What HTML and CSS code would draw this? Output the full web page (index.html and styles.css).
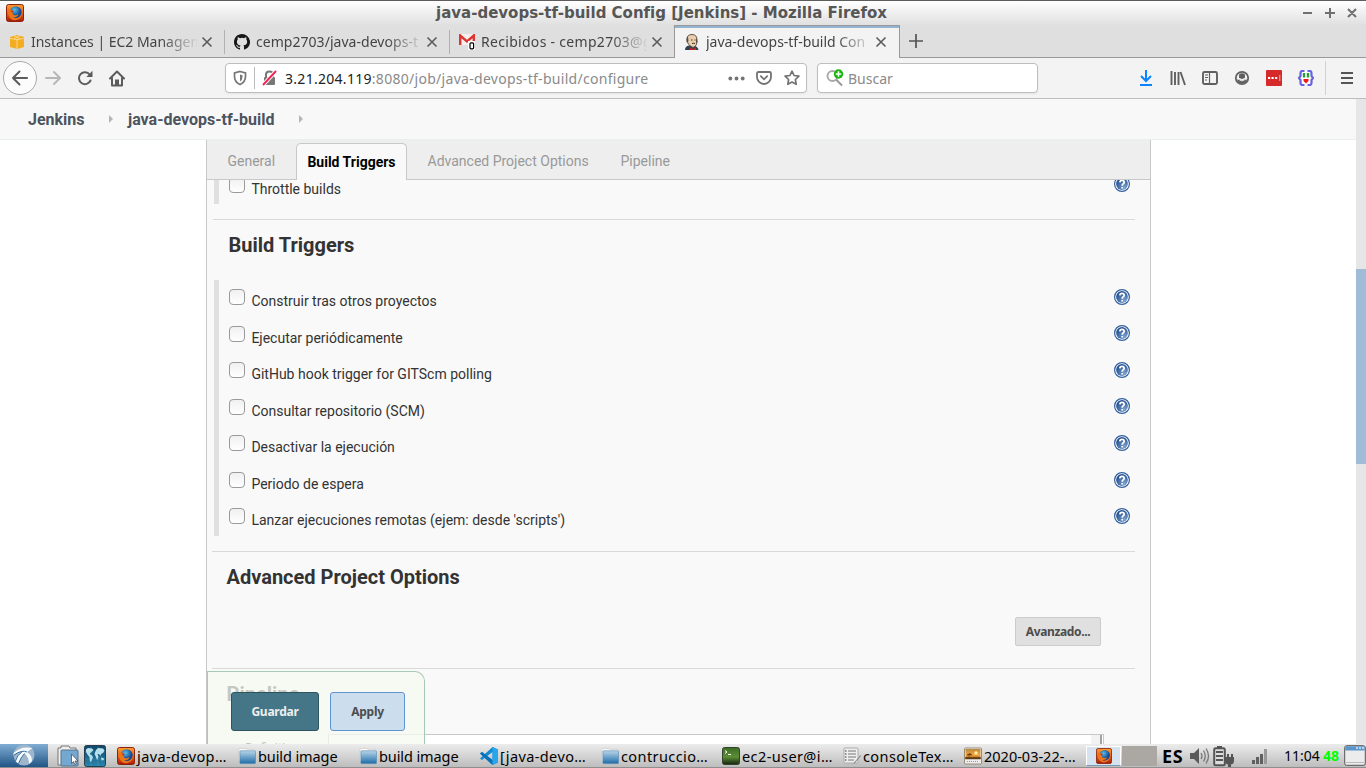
FILE: index.html
```html
<!DOCTYPE html>
<html lang="es">
<head>
<meta charset="utf-8">
<title>java-devops-tf-build Config [Jenkins]</title>
<link rel="stylesheet" href="styles.css">
</head>
<body>
<svg class="defs" width="0" height="0">
  <defs>
    <linearGradient id="gold" x2="0" y2="1"><stop stop-color="#ff9d2e"/><stop offset=".45" stop-color="#ed6b18"/><stop offset="1" stop-color="#a51909"/></linearGradient>
    <radialGradient id="globe" cx=".4" cy=".3"><stop stop-color="#58bdea"/><stop offset="1" stop-color="#174b91"/></radialGradient>
    <linearGradient id="fold" x2="0" y2="1"><stop stop-color="#b9d6ea"/><stop offset="1" stop-color="#1d6ca8"/></linearGradient>
    <radialGradient id="helpfill" cx=".7" cy=".8" r=".8"><stop stop-color="#7fa3cf"/><stop offset="1" stop-color="#24508f"/></radialGradient>
    <linearGradient id="term" x2="0" y2="1"><stop stop-color="#3c6b25"/><stop offset=".55" stop-color="#5b8f35"/><stop offset="1" stop-color="#16240f"/></linearGradient>
    <linearGradient id="sunset" x2="0" y2="1"><stop stop-color="#b98a3e"/><stop offset=".6" stop-color="#f7a53c"/><stop offset="1" stop-color="#8c4d15"/></linearGradient>
    <linearGradient id="sea" x2="0" y2="1"><stop stop-color="#0f4668"/><stop offset="1" stop-color="#2a86ad"/></linearGradient>
  </defs>
  <symbol id="firefox" viewBox="0 0 18 18">
    <rect x=".5" y=".5" width="17" height="17" rx="2" fill="url(#gold)" stroke="#8e220c"/>
    <circle cx="9.7" cy="8.3" r="6" fill="url(#globe)"/>
    <path d="M2.2 4.2 3 6 5 5.5 7.5 6.7 6.4 8.2 7 10.4c2 1.6 4.300 .6 5.500-.4-.4 2.500-3.500 4.200-6 3.200 4 2.800 9.200-.6 9.300-5.200.8 5-2.800 8.200-6.800 8.200-5.300 0-8-5.200-6.800-12z" fill="#ee7419"/>
    <path d="M4.500 6.500 7.500 6.900 6.200 8.400z" fill="#b3260e"/>
  </symbol>
  <symbol id="x" viewBox="0 0 12 12"><path d="m1.500 1.500 9 9m0-9-9 9" fill="none" stroke="#5b5b5b" stroke-width="1.600"/></symbol>
  <symbol id="folder" viewBox="0 0 19 19">
    <path d="M1 15V2.500Q1 1.500 2 1.500H8L9.500 2.500H17.500V15z" fill="#f8f8f8" stroke="#c4c4c4" stroke-width=".6"/>
    <rect x="2" y="4" width="16.500" height="13.500" rx="1" fill="url(#fold)" stroke="#5085ad" stroke-width=".6"/>
  </symbol>
  <symbol id="help" viewBox="0 0 16 16">
    <circle cx="8" cy="8" r="7.400" fill="#fff" stroke="#315f9e" stroke-width="1.200"/>
    <circle cx="8" cy="8" r="5.900" fill="url(#helpfill)"/>
    <path d="M5.800 6.400Q6 4.400 8 4.400T10.300 6.100Q10.300 7.200 9 8 8.200 8.500 8.200 9.700M8.200 10.900v1.600" fill="none" stroke="#fff" stroke-width="1.700"/>
  </symbol>
</svg>

<div class="screen">
  <header class="titlebar">
    <svg class="app-icon"><use href="#firefox"/></svg>
    <h1 class="window-title">java-devops-tf-build Config [Jenkins] - Mozilla Firefox</h1>
    <svg class="window-controls" viewBox="0 0 56 14"><path d="M2 7h9M24 7h10M29 2v10M47 3l8 8m0-8-8 8" fill="none" stroke="#707070" stroke-width="2"/></svg>
  </header>

  <nav class="tabs">
    <div class="tab">
      <svg class="favicon" viewBox="0 0 16 16"><path d="M1 3 8 1l7 2v10l-7 2-7-2z" fill="#f4ad20"/><path d="M1 4.500 8 5.500l7-1M8 5.500V15M5 1.500 11 5M11 1.500 5 5" stroke="#fbe1a6" fill="none" stroke-width=".8"/></svg>
      <span class="tab-label t1">Instances | EC2 Managem</span><svg class="close"><use href="#x"/></svg>
    </div>
    <div class="tab">
      <svg class="favicon" viewBox="0 0 16 16"><path fill="#171515" d="M8 0C3.580 0 0 3.580 0 8c0 3.540 2.290 6.530 5.470 7.590.4.070.55-.17.55-.38 0-.19-.01-.82-.01-1.490-2.010.37-2.530-.49-2.690-.94-.09-.23-.48-.94-.82-1.130-.28-.15-.68-.52-.01-.53.63-.01 1.080.58 1.230.82.72 1.210 1.870.87 2.330.66.07-.52.28-.87.51-1.070-1.780-.2-3.640-.89-3.640-3.950 0-.87.31-1.590.82-2.150-.08-.2-.36-1.020.08-2.120 0 0 .67-.21 2.200.82a7.600 7.600 0 0 1 4 0c1.530-1.040 2.200-.82 2.200-.82.44 1.100.16 1.920.08 2.120.51.56.82 1.270.82 2.150 0 3.070-1.870 3.750-3.650 3.950.29.25.54.73.54 1.480 0 1.070-.01 1.930-.01 2.200 0 .21.15.46.55.38A8 8 0 0 0 8 0z"/></svg>
      <span class="tab-label t2">cemp2703/java-devops-t</span><svg class="close"><use href="#x"/></svg>
    </div>
    <div class="tab">
      <svg class="favicon" viewBox="0 0 16 16"><path d="M0 0h16v11H0z" fill="#f7eeee"/><path d="M1.200 11V1.500L8 7.500l6.800-6V11" fill="none" stroke="#dd3630" stroke-width="2.400"/><rect x="9" y="7" width="7" height="9" fill="#fff"/><rect x="11" y="8.800" width="3.600" height="6" rx="1" fill="#fff" stroke="#000" stroke-width="1.200"/></svg>
      <span class="tab-label t3">Recibidos - cemp2703@g</span><svg class="close"><use href="#x"/></svg>
    </div>
    <div class="tab active">
      <svg class="favicon" viewBox="0 0 16 16"><path d="M1 16q0-4 4-4.500l5 0q4 1 4.500 4.500z" fill="#2f4152"/><path d="M3 5Q3 .5 8 .5T13 6q.5 6-4 7.500Q3 11 3 5" fill="#e9cfae" stroke="#54463b" stroke-width=".9"/><path d="M3 9Q1.500 5 4 2.500L4.500 7zM12 3l1.500 5-1.500 1z" fill="#5a4b3e"/><path d="M7 6h1.500M10.500 6h1M8 9.500q1.500-.5 3 0" stroke="#3b302a" fill="none"/><path d="M6 13.500 9 15l3-1.500V16H6z" fill="#c52525"/></svg>
      <span class="tab-label t4">java-devops-tf-build Con</span><svg class="close"><use href="#x"/></svg>
    </div>
    <svg class="new-tab" viewBox="0 0 14 14"><path d="M0 7h14M7 0v14" stroke="#555" stroke-width="1.700"/></svg>
  </nav>

  <section class="toolbar">
    <div class="nav-buttons">
      <span class="back"><svg width="18" height="16" viewBox="0 0 18 16"><path d="M16 8H2M8.500 1.500 2 8l6.500 6.500" fill="none" stroke="#5c5c5c" stroke-width="2" stroke-linecap="round" stroke-linejoin="round"/></svg></span>
      <svg class="forward" width="17" height="16" viewBox="0 0 17 16"><path d="M1 8h14M9 2l6 6-6 6" fill="none" stroke="#b7b7b7" stroke-width="2" stroke-linecap="round" stroke-linejoin="round"/></svg>
      <svg class="reload" width="16" height="16" viewBox="0 0 16 16"><path d="M12.700 4.500A6 6 0 1 0 13.500 10.500" fill="none" stroke="#5c5c5c" stroke-width="2" stroke-linecap="round"/><path d="M15.500.8V7H9.300z" fill="#5c5c5c"/></svg>
      <svg class="home" width="16" height="17" viewBox="0 0 16 17"><path d="M1 8.500 8 1.500l7 7M3 8v7.500h10V8" fill="none" stroke="#5c5c5c" stroke-width="2" stroke-linecap="round" stroke-linejoin="round"/><path d="M6 15V9.500h4V15" fill="#5c5c5c"/></svg>
    </div>
    <div class="urlbar">
      <svg class="shield" width="14" height="16" viewBox="0 0 14 16"><path d="M7 1.500 12.500 3v3.500Q12.500 12 7 14.500 1.500 12 1.500 6.500V3z" fill="none" stroke="#777" stroke-width="1.700"/><path d="M7 4.500v7Q9.500 10 9.500 6.500V5.200z" fill="#777"/></svg>
      <i class="url-sep"></i>
      <svg class="lock" width="15" height="16" viewBox="0 0 15 16"><path d="M4 7V4.500Q4 1.500 7.500 1.500T11 4.500V7" fill="none" stroke="#777" stroke-width="2"/><rect x="2" y="7" width="11" height="8" rx="1" fill="#777"/><path d="M1 15 14 1" stroke="#fff" stroke-width="4"/><path d="M1 15 14 1" stroke="#f32455" stroke-width="1.900"/></svg>
      <span class="url"><b>3.21.204.119</b>:8080/job/java-devops-tf-build/configure</span>
      <svg class="dots" width="17" height="5" viewBox="0 0 17 5"><circle cx="2.300" cy="2.500" r="1.900"/><circle cx="8.500" cy="2.500" r="1.900"/><circle cx="14.700" cy="2.500" r="1.900"/></svg>
      <svg class="pocket" width="16" height="15" viewBox="0 0 16 15"><path d="M2.500 1h11Q15 1 15 2.500V6a7 7 0 0 1-14 0V2.500Q1 1 2.500 1z M4.800 5.200 8 8.300l3.200-3.100" fill="none" stroke="#737373" stroke-width="1.800" stroke-linecap="round"/></svg>
      <svg class="star" width="16" height="16" viewBox="0 0 16 16"><path d="m8 1.200 2.100 4.300 4.800.7-3.500 3.300.8 4.800L8 12l-4.200 2.300.8-4.800L1.100 6.200l4.800-.7z" fill="none" stroke="#737373" stroke-width="1.700" stroke-linejoin="round"/></svg>
    </div>
    <div class="searchbar">
      <svg width="18" height="18" viewBox="0 0 18 18"><circle cx="6.500" cy="7" r="5" fill="none" stroke="#aaa" stroke-width="2"/><path d="m10 10.500 6 6" stroke="#999" stroke-width="2"/><circle cx="12.500" cy="5" r="4.700" fill="#19b90d"/><path d="M9.800 5h5.400M12.500 2.300v5.400" stroke="#fff" stroke-width="1.500"/></svg>
      <span>Buscar</span>
    </div>
    <div class="tools">
      <svg viewBox="0 0 16 16"><path d="M8 0v11M3 6l5 5 5-5M2 15h12" fill="none" stroke="#0a84ff" stroke-width="2"/></svg>
      <svg viewBox="0 0 16 16"><path d="M1.500 1v14M5 2v13M8.500 2v13M10.500 2 15 15" fill="none" stroke="#606060" stroke-width="1.900"/></svg>
      <svg viewBox="0 0 16 16"><rect x="1" y="2" width="14" height="12" rx="1.500" fill="none" stroke="#606060" stroke-width="1.900"/><path d="M7.500 2v12M3 5h3M3 7.500h3M3 10h2" stroke="#606060" stroke-width="1.200"/></svg>
      <svg viewBox="0 0 16 16"><circle cx="8" cy="8" r="6.200" fill="#f3f3f3" stroke="#606060" stroke-width="1.800"/><path d="M5 5.500Q5 3.300 8 3.300t3 2.200V8q0 2.300-3 2.300T5 8z" fill="#606060"/><path d="M3 9.500q2 0 2.500.7 2.500 2 5 0 .5-.7 2.500-.7-1 4-5 4.200-4-.2-5-4.200" fill="#606060"/><path d="M5.200 8.300Q8 11.200 10.800 8.300" fill="none" stroke="#f3f3f3" stroke-width="1.500"/></svg>
      <svg viewBox="0 0 16 16"><rect width="16" height="16" rx="1" fill="#d62929"/><path d="M2 8h2.200M5.500 8h2.200M9 8h2.200" stroke="#fff" stroke-width="2.200"/><path d="M13.800 5v6" stroke="#f4b0b0"/></svg>
      <svg viewBox="0 0 16 16"><path d="M4 1h8v14H4z" fill="#fff"/><path d="M6.500 1H4.500Q2.500 1 2.500 3v3L1 8l1.500 2v3q0 2 2 2h2M9.500 1h2q2 0 2 2v3L15 8l-1.500 2v3q0 2-2 2h-2" fill="none" stroke="#6762df" stroke-width="2.200"/><path d="M6 3v4.500M10 3v4.500" stroke="#2a9d3b" stroke-width="2.400"/><path d="M5.500 9h5v2L8 13.500 5.500 11z" fill="#f11919"/></svg>
    </div>
    <i class="tool-sep"></i>
    <svg class="menu" width="12" height="12" viewBox="0 0 12 12"><path d="M0 1h12M0 6h12M0 11h12" stroke="#555" stroke-width="2"/></svg>
  </section>

  <div class="viewport">
    <main class="page">
      <nav class="breadcrumb">
        <a class="bc1">Jenkins</a><i class="caret"></i><a class="bc2">java-devops-tf-build</a><i class="caret"></i>
      </nav>
      <div class="config">
        <nav class="sections">
          <a class="s1">General</a><a class="current">Build Triggers</a><a class="s3">Advanced Project Options</a><a class="s4">Pipeline</a>
        </nav>
        <div class="scrolled">
          <div class="group first">
            <div class="option"><i class="check"></i><label>Throttle builds</label><svg class="help"><use href="#help"/></svg></div>
          </div>
          <section class="block triggers">
            <h2>Build Triggers</h2>
            <div class="group">
              <div class="option"><i class="check"></i><label>Construir tras otros proyectos</label><svg class="help"><use href="#help"/></svg></div>
              <div class="option"><i class="check"></i><label>Ejecutar periódicamente</label><svg class="help"><use href="#help"/></svg></div>
              <div class="option"><i class="check"></i><label>GitHub hook trigger for GITScm polling</label><svg class="help"><use href="#help"/></svg></div>
              <div class="option"><i class="check"></i><label>Consultar repositorio (SCM)</label><svg class="help"><use href="#help"/></svg></div>
              <div class="option"><i class="check"></i><label>Desactivar la ejecución</label><svg class="help"><use href="#help"/></svg></div>
              <div class="option"><i class="check"></i><label>Periodo de espera</label><svg class="help"><use href="#help"/></svg></div>
              <div class="option"><i class="check"></i><label>Lanzar ejecuciones remotas (ejem: desde 'scripts')</label><svg class="help"><use href="#help"/></svg></div>
            </div>
          </section>
          <section class="block advanced">
            <h2>Advanced Project Options</h2>
            <button class="more" type="button">Avanzado...</button>
          </section>
          <section class="block pipeline">
            <h2>Pipeline</h2>
            <div class="definition"><span>Definition</span><div class="field"><i></i></div></div>
          </section>
        </div>
        <div class="savebar"><button class="save" type="button">Guardar</button><button class="apply" type="button">Apply</button></div>
      </div>
    </main>
    <aside class="scrollbar"><i></i></aside>
  </div>

  <footer class="taskbar">
    <div class="start"><svg width="24" height="22" viewBox="0 0 24 22"><circle cx="12" cy="11" r="10.500" fill="#9db6cc"/><path d="M1.500 9Q9 1.500 20.500 4L15 8Q20 11 20 17l-3 3Q17 13 12.500 9.500 9 13 6.500 19.500L3.500 17Q5 11 10 7.800 5 8 1.500 11z" fill="#f5faff"/><path d="M10 7.800Q5 11 3.500 17M12.500 9.500Q9 13 6.500 19.500M15 8Q10 5.500 2 11" fill="none" stroke="#3c6f9d" stroke-width="1"/></svg></div>
    <svg class="launch files" viewBox="0 0 22 22"><path d="M1 20V3h3V1h8l1 2h6v17z" fill="#eee" stroke="#777"/><rect x="4" y="5" width="17" height="16" rx="1" fill="#75a8d0" stroke="#54748f"/><path d="m14.500 9v9.500l2-2 1.300 3 1.500-.7-1.300-2.800H21z" fill="#fff" stroke="#444" stroke-width=".7"/></svg>
    <svg class="launch web" viewBox="0 0 22 22"><rect x=".5" y=".5" width="21" height="21" rx="2" fill="url(#sea)" stroke="#263f50"/><path d="M2 4.500 4 3l4 .5L9.500 5 7 7.500 5.500 9l2 1 1.500 2-1.500 4L6 17l-.5-5-2-2.500L2 7zM12 5l2-2 5 .5 1.500 2L19 8l-2 1-.5 2-1.500-2-1.500 0 1 3-1.500 3-1.500-4L10.500 9zM17 12.500l2.500.5.5 2-2.500.5z" fill="#b9e3ef"/><path d="M1 7h20M1 14h20M7 1v20M14 1v20" stroke="#7fc4da" stroke-opacity=".35" stroke-width=".6"/></svg>
    <div class="tasks">
      <div class="task"><svg><use href="#firefox"/></svg><span>java-devop…</span></div>
      <div class="task dir"><svg><use href="#folder"/></svg><span>build image</span></div>
      <div class="task dir"><svg><use href="#folder"/></svg><span>build image</span></div>
      <div class="task"><svg viewBox="0 0 18 18"><path d="M12.500 0 18 2.500v13L12.500 18 0 6.500 2 5l10.500 8V5L2 13 0 11.500z" fill="#168bd2"/><path d="M0 6.500 2 5l10.500 8v5z" fill="#0b70b8"/><path d="M12.500 0 18 2.500v13L12.500 18z" fill="#29a5eb"/></svg><span>[java-devo…</span></div>
      <div class="task"><svg><use href="#folder"/></svg><span>contruccio…</span></div>
      <div class="task"><svg viewBox="0 0 18 18"><rect x=".5" y=".5" width="17" height="17" rx="2" fill="url(#term)" stroke="#34432c"/><path d="m3 3.500 2 1.500-2 1.500M6 7.500h3" fill="none" stroke="#fff"/></svg><span>ec2-user@i…</span></div>
      <div class="task"><svg viewBox="0 0 18 18"><rect x="1" y="1" width="14" height="15" rx="1" fill="#efefef" stroke="#aaa"/><path d="M5 4h8M5 7h8M5 10h8M5 13h6" stroke="#777"/><path d="M2 4h1.500M2 7h1.500M2 10h1.500M2 13h1.500" stroke="#333"/><path d="m17.500 8-6 7-1.500 2 2-1 6-7z" fill="#888"/></svg><span>consoleTex…</span></div>
      <div class="task"><svg viewBox="0 0 18 18"><rect x=".5" y="1" width="17" height="16" rx="1" fill="#eee" stroke="#998b76"/><rect x="1.500" y="2" width="15" height="10" fill="url(#sunset)"/><path d="M3 8q3-3 5 0zM5 8v3M1.500 10.500h15V12h-15z" fill="#5e3b16" stroke="#5e3b16" stroke-width=".5"/><circle cx="12" cy="6" r="1.700" fill="#fff2ad"/><path d="M3 14.500h12" stroke="#999" stroke-dasharray="1 1"/></svg><span class="shot">2020-03-22-…</span></div>
    </div>
    <div class="desk on"><svg><use href="#firefox"/></svg></div><div class="desk"></div>
    <strong class="lang">ES</strong>
    <svg class="tray" width="86" height="24" viewBox="0 0 86 24">
      <path d="M1 9h4l5-5v16l-5-5H1z" fill="#5a5a5a"/><path d="M12 9q2 3 0 6M14.500 6.500q3.500 5.500 0 11M17 4.500q5 7.500 0 15" fill="none" stroke="#777" stroke-width="1.300"/>
      <path d="M28 2h5v2h-5z" fill="#555"/><rect x="25.200" y="4.200" width="10.600" height="17" rx="1.500" fill="#ddd" stroke="#555" stroke-width="2"/><path d="M27 8h7M27 12h7M27 16h7" stroke="#555" stroke-width="2"/><path d="M36 13h2v-3h2v3h2v-3h2v3h1v4q0 3-3 3.500V23h-3v-2.500q-3-.5-3-3.500z" fill="#555"/>
      <path d="M63 16h3v4h-3zM67 13h3v7h-3zM71 10h3v10h-3z" fill="#606060"/><path d="M75 5h3v15h-3z" fill="#999"/>
    </svg>
    <span class="clock">11:04</span><strong class="temp">48</strong>
    <svg class="show-desktop" width="22" height="21" viewBox="0 0 22 21"><rect x=".7" y=".7" width="20.600" height="19.600" rx="2" fill="#ececec" stroke="#555"/><path d="M1.300 2q0-.7.7-.7h18q.7 0 .7.700v3.500H1.300z" fill="#5a95cc"/><path d="M12 3h8" stroke="#d6eafa" stroke-width="1.500" stroke-dasharray="2 1"/><path d="M2 17.500h18" stroke="#bbb"/></svg>
  </footer>
</div>
</body>
</html>
```
FILE: styles.css
```css
* { box-sizing: border-box; }
body { margin: 0; overflow: hidden; font-family: "Noto Sans", "Open Sans", sans-serif; }
svg { display: block; flex: none; }
i { font-style: normal; display: block; flex: none; }
.defs { position: absolute; }
.screen { width: 1366px; height: 768px; display: flex; flex-direction: column; overflow: hidden; background: #fff; }

/* Window frame */
.titlebar { height: 25px; flex: none; display: flex; align-items: center; border-top: 1px solid #5d5d5d; background: linear-gradient(#fff, #e0e0e0); padding: 0 9px 0 6px; }
.app-icon { width: 18px; height: 18px; }
.window-title { flex: 1; margin: 0; padding-right: 2px; text-align: center; font: bold 15px/24px "DejaVu Sans", sans-serif; color: #565656; white-space: nowrap; }
.window-controls { width: 56px; height: 14px; }

.tabs { height: 33px; flex: none; display: flex; background: #dfdfdf; border-bottom: 1px solid #999; }
.tab { width: 225px; height: 32px; padding: 1px 12px 0 9px; display: flex; align-items: center; position: relative; }
.tab:not(.active)::after { content: ""; position: absolute; right: 0; top: 5px; width: 1px; height: 24px; background: #b1b1b1; }
.tab:nth-child(3)::after { display: none; }
.tab.active { height: 33px; width: 226px; margin-left: -1px; padding-bottom: 1px; padding-top: 0; background: #f3f3f3; border: 1px solid #999; border-width: 1px 1px 0; box-shadow: inset 0 2px #92b4d0; }
.favicon { width: 16px; height: 16px; }
.tab-label { width: 166px; margin-left: 6px; overflow: hidden; white-space: nowrap; font-size: 14px; line-height: 22px; color: #444; mask-image: linear-gradient(90deg, #000 130px, transparent 168px); }
.close { width: 12px; height: 12px; margin-left: 4px; }
.t1 { letter-spacing: -.02px; }
.t2 { letter-spacing: .04px; }
.t3 { letter-spacing: .3px; }
.t4 { letter-spacing: -.02px; }
.new-tab { width: 14px; height: 14px; margin: 9px 0 0 9px; }

/* Navigation toolbar */
.toolbar { height: 41px; flex: none; display: flex; align-items: center; background: #f3f3f3; border-bottom: 1px solid #bdbdbd; }
.nav-buttons { width: 225px; display: flex; align-items: center; padding-left: 3px; }
.back { width: 34px; height: 34px; border: 1px solid #aaa; border-radius: 50%; background: #fcfcfc; display: flex; align-items: center; justify-content: center; }
.forward { margin-left: 8px; }
.reload { margin-left: 15px; }
.home { margin-left: 16px; }
.urlbar, .searchbar { height: 30px; border: 1px solid #bebebe; border-radius: 4px; background: #fff; display: flex; align-items: center; box-shadow: 0 1px 2px #0001; }
.urlbar { width: 582px; padding: 0 6px 0 7px; }
.url-sep { width: 1px; height: 22px; background: #bbb; margin: 0 7px; }
.url { width: 444px; margin: 1px 0 0 8px; font-size: 14px; line-height: 22px; letter-spacing: .29px; color: #8a8a8a; white-space: nowrap; }
.url b { font-weight: 400; color: #222; }
.dots { fill: #737373; }
.pocket { margin-left: 11px; }
.star { margin-left: 12px; }
.searchbar { width: 221px; margin-left: 10px; padding-left: 8px; gap: 4px; font-size: 14px; color: #8a8a8a; }
.tools { display: flex; gap: 16px; margin-left: 100px; }
.tools svg { width: 16px; height: 16px; }
.tool-sep { width: 1px; height: 34px; background: #d2d2d2; margin: 0 15px 0 11px; }

/* Jenkins page */
.viewport { height: 645px; flex: none; display: flex; overflow: hidden; font-family: Roboto, sans-serif; }
.page { width: 1356px; }
.breadcrumb { height: 41px; padding-left: 28px; display: flex; align-items: center; background: #f8f8f8; border-bottom: 1px solid #e9eef1; font-size: 16px; font-weight: 700; color: #4d545d; }
.breadcrumb a { white-space: nowrap; }
.bc1 { width: 81px; }
.bc2 { width: 171px; }
.caret { width: 4px; height: 8px; background: #b5b5b5; clip-path: polygon(0 0, 100% 50%, 0 100%); }
.bc1 + .caret { margin-right: 15px; }
.config { position: relative; width: 945px; height: 604px; margin-left: 206px; border: solid #c8c8c8; border-width: 0 1px; background: #f9f9f9; overflow: hidden; }
.sections { height: 40px; display: flex; align-items: flex-end; background: #eee; border-bottom: 1px solid #c8c8c8; font-size: 14px; line-height: 37px; color: #999; white-space: nowrap; padding-left: 20.500px; }
.sections a { height: 36px; }
.s1 { width: 68.500px; }
.sections .current { width: 111px; height: 37px; margin-bottom: -1px; border: 1px solid #c8c8c8; border-bottom: 0; border-radius: 5px 5px 0 0; background: #f9f9f9; color: #000; font-weight: 700; line-height: 36px; text-align: center; }
.s3 { margin-left: 20.500px; width: 193px; }
.scrolled { height: 564px; overflow: hidden; padding: 0 15px 0 5px; color: #333; }
.group { margin-left: 2px; border-left: 5px solid #e0e0e0; padding-left: 10px; }
.first { height: 24px; overflow: hidden; }
.first .option { margin-top: -12px; }
.first .help { margin-top: 8px; }
.option { height: 36.57px; display: flex; align-items: flex-start; font-size: 14px; line-height: 20px; color: #333; white-space: nowrap; }
.check { width: 16px; height: 16px; margin-top: 9px; border: 1px solid #9a9a9a; border-radius: 4px; background: linear-gradient(#f0f0f0, #fff); }
.option label { margin: 11px auto 0 6.400px; }
.help { width: 16px; height: 16px; margin: 8.700px 5px 0 0; }
.block { border-top: 1px solid #d9d9d9; }
.block h2 { margin: 0; padding: 0 0 0 14.500px; font-size: 20px; line-height: 26px; font-weight: 700; color: #333; }
.triggers { margin: 15px 0 0 1px; height: 332px; padding-top: 12px; }
.triggers h2 { padding-left: 15.500px; }
.triggers .group { margin: 22px 0 0 1px; }
.advanced { height: 117px; padding-top: 12px; }
button { font-family: "Noto Sans", sans-serif; font-size: 12px; font-weight: 700; padding: 0; }
.more { display: block; width: 86px; height: 29px; margin: 27px 34px 0 auto; border: 1px solid #ccc; border-radius: 2px; background: #e0e0e0; color: #4d4d4d; letter-spacing: -.35px; }
.pipeline { height: 80px; padding-top: 12px; }
.definition { display: flex; margin-top: 27px; height: 30px; font-size: 13px; }
.definition span { width: 116px; padding: 6px 0 0 33px; }
.field { width: 776px; border: 1px solid #c8c8c8; background: #fff; padding-right: 1px; }
.field i { width: 11px; height: 20px; margin-left: auto; background: #f2f2f2; border-right: 2px solid #a2a2a2; }
.savebar { position: absolute; left: 0; bottom: 0; width: 218px; height: 73px; padding: 20px 0 0 23px; display: flex; gap: 11px; border: 1px solid #a5cab7; border-bottom: 0; border-radius: 0 10px 0 0; background: rgba(245, 249, 239, .75); }
.savebar button { height: 39px; border-radius: 3px; letter-spacing: -.25px; }
.save { width: 88px; border: 1px solid #2e5361; background: #457687; color: #eee; }
.apply { width: 75px; border: 1px solid #5d94d0; background: #ccddee; color: #4d4d4d; }
.scrollbar { width: 10px; background: #e6e6e6; padding-top: 170px; }
.scrollbar i { height: 195px; background: #a0bcd6; }

/* Desktop panel */
.taskbar { height: 24px; flex: none; display: flex; align-items: center; background: linear-gradient(#ececec, #bdbdbd); border-bottom: 1px solid #8e8e8e; color: #000; white-space: nowrap; }
.start { width: 48px; height: 23px; display: flex; justify-content: center; background: linear-gradient(#80add3, #205586); }
.launch { width: 22px; height: 22px; }
.files { margin-left: 9px; }
.web { margin-left: 5px; }
.tasks { width: 969px; margin-left: 11px; display: flex; }
.task { width: 121px; flex: none; display: flex; align-items: center; font-size: 14.500px; line-height: 22px; letter-spacing: .4px; gap: 2px; }
.task.dir { letter-spacing: -.1px; }
.shot { letter-spacing: 0; }
.task svg { width: 18px; height: 18px; }
.desk { width: 35px; height: 20px; margin-left: 1px; background: #aba7a2; display: flex; justify-content: center; align-items: center; }
.desk.on { margin-left: 0; background: #d6e3ef; border: 1px solid #fff; border-bottom-color: #7898b5; }
.desk svg { width: 16px; height: 16px; }
.lang { width: 27px; margin-left: 5px; font-size: 18px; line-height: 22px; letter-spacing: .7px; }
.clock { margin-left: 9px; width: 39px; font-size: 14px; }
.temp { width: 21px; font-size: 14px; color: #0f0; }
```
